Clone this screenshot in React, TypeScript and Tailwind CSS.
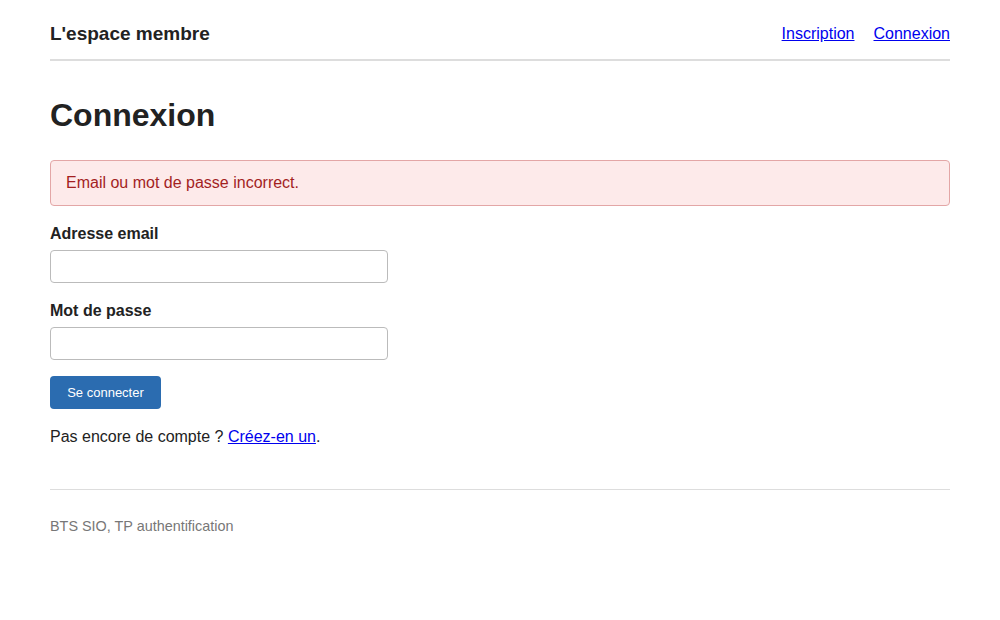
export default function App() {
  return (
    <div className="min-h-[620px] bg-white text-[#222] font-['Liberation_Sans',Arial,sans-serif]">
      <div className="mx-auto w-[900px]">
        <header className="flex items-center justify-between border-b-2 border-[#ddd] pt-[23px] pb-[14px]">
          <div className="text-[19px] font-bold leading-[22px]">L'espace membre</div>
          <nav className="flex gap-[19px] text-[16px] leading-[22px]">
            <a href="#" className="text-[#0000ee] underline">Inscription</a>
            <a href="#" className="text-[#0000ee] underline">Connexion</a>
          </nav>
        </header>
        <main>
          <h1 className="mt-[36px] text-[32px] font-bold leading-[37px]">Connexion</h1>
          <div className="mt-[26px] rounded-[4px] border border-[#e3a6a6] bg-[#fdeaea] px-[15px] py-[13px] text-[16px] leading-[18px] text-[#a31f1f]">
            Email ou mot de passe incorrect.
          </div>
          <form className="flex flex-col" onSubmit={(e) => e.preventDefault()}>
            <label className="mt-[19px] text-[16px] font-bold leading-[18px]">Adresse email</label>
            <input type="email" className="mt-[7px] h-[33px] w-[338px] rounded-[4px] border border-[#bbb] px-2 outline-none" />
            <label className="mt-[19px] text-[16px] font-bold leading-[18px]">Mot de passe</label>
            <input type="password" className="mt-[7px] h-[33px] w-[338px] rounded-[4px] border border-[#bbb] px-2 outline-none" />
            <button type="submit" className="mt-[16px] h-[33px] w-[111px] rounded-[4px] bg-[#2b6cb0] text-[13px] text-white">
              Se connecter
            </button>
          </form>
          <p className="mt-[19px] text-[16px] leading-[18px]">
            Pas encore de compte ? <a href="#" className="text-[#0000ee] underline">Créez-en un</a>.
          </p>
        </main>
        <footer className="mt-[43px] border-t border-[#ddd] pt-[28px] text-[14.4px] leading-[17px] text-[#777]">
          BTS SIO, TP authentification
        </footer>
      </div>
    </div>
  );
}
